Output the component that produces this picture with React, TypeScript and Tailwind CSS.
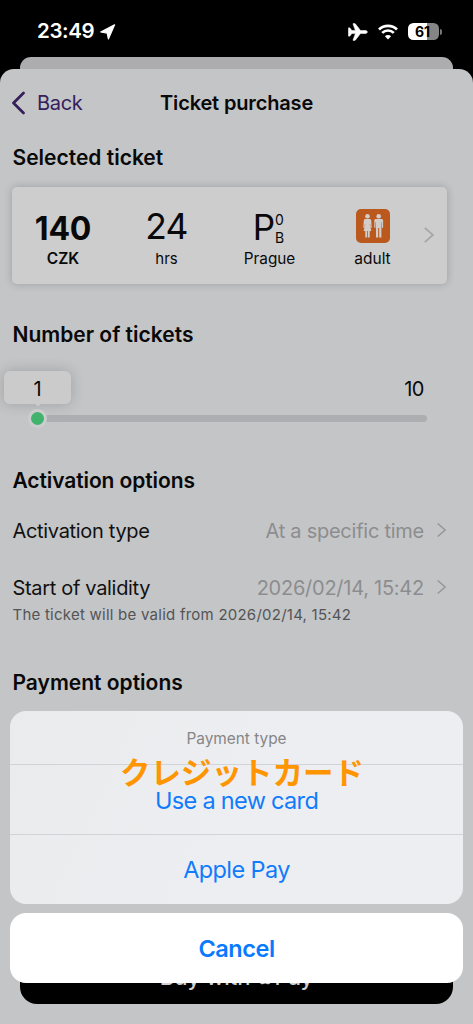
import React from "react";

function Chevron({ className }: { className: string }) {
  return (
    <svg viewBox="0 0 10 16" className={className} fill="none" stroke="currentColor" strokeWidth="1.7">
      <path d="M0.8 0.8 L9 8 L0.8 15.2" />
    </svg>
  );
}

function StatusBar() {
  return (
    <div className="flex h-[57px] shrink-0 items-center pt-[6px] pl-[37px] pr-[31px] text-white">
      <span className="text-[20.5px] font-semibold tracking-[-0.35px]">23:49</span>
      <svg viewBox="0 0 16 16" className="ml-[5px] h-4 w-[17px]" fill="currentColor" stroke="currentColor" strokeWidth="1.2" strokeLinejoin="round">
        <path d="M15.100 .8 8.900 14.900 7.700 9.100 1.200 8z" />
      </svg>
      <svg viewBox="0 0 20 18" className="ml-auto h-[18px] w-5" fill="currentColor" stroke="currentColor" strokeWidth="0.5">
        <path d="M19.400 9c0 .9-1 1.500-2.400 1.500h-4.500L7.500 17c-.2.3-.5.5-.9.5H5.300c-.3 0-.4-.2-.3-.5L7.400 10.500H3.900L2 12.900c-.2.2-.4.300-.7.300H.8c-.3 0-.4-.1-.4-.4V5.200c0-.3.1-.4.4-.4h.5c.3 0 .5.1.7.3L3.900 7.500h3.500L5 1C4.900.7 5 .5 5.300.5h1.300c.4 0 .7.2.9.5l5 6.500H17c1.400 0 2.400.6 2.400 1.500z" />
      </svg>
      <svg viewBox="0 0 20 16" className="ml-[10px] h-4 w-5" fill="none" stroke="currentColor" strokeWidth="2.700">
        <path d="M1 5.500a12.800 12.800 0 0 1 18 0M4.200 8.900a8.200 8.200 0 0 1 11.600 0" />
        <path d="M10 15.400 6.900 12.200a4.400 4.400 0 0 1 6.200 0z" fill="currentColor" stroke="none" />
      </svg>
      <div className="ml-[10px] flex h-[17px] w-[31px] items-center justify-center overflow-hidden rounded-[5.500px] bg-[linear-gradient(to_right,#fff_62%,#858585_62%)] pr-[2px] text-[14px] font-bold tracking-[-0.1px] text-black">
        61
      </div>
      <div className="ml-px h-[6px] w-[2px] rounded-r-full bg-[#777]" />
    </div>
  );
}

function Heading({ children, className }: { children: React.ReactNode; className: string }) {
  return <h2 className={`flex h-10 items-center pl-[0.5px] text-[21px] leading-[31px] font-semibold text-[#090909] ${className}`}>{children}</h2>;
}

function AdultIcon() {
  return (
    <svg viewBox="0 0 34 34" className="h-[34px] w-[34px]">
      <rect width="34" height="34" rx="5" fill="#bb581e" />
      <g fill="#d3cdca">
        <circle cx="11.500" cy="7.300" r="2.300" />
        <path d="M9.400 10h4.200c1 0 1.500.6 1.600 1.500l.5 6.700c0 .7-1 .8-1.200 0L14 14.500l-.2 1.500 1.600 6h-1.700v6.600h-1.800V22h-.8v6.600H9.300V22H7.600L9.200 16 9 14.500l-.5 3.700c-.2.8-1.200.7-1.200 0l.5-6.700c.1-.9.6-1.500 1.600-1.500z" />
        <circle cx="22.700" cy="7.300" r="2.300" />
        <path d="M20 10h5.400c1.200 0 1.700.6 1.700 1.600v6.700c0 .8-1.200.8-1.200 0v-5h-.5v15.300h-2.200V19h-1v9.600H20V13.300h-.5v5c0 .8-1.200.8-1.200 0v-6.700c0-1 .5-1.600 1.700-1.600z" />
      </g>
    </svg>
  );
}

function TicketCard() {
  return (
    <div className="mt-[10px] flex h-[97px] w-[435px] rounded-[5px] bg-[#cdcdcd] text-[#090909] shadow-[0_0_9px_rgba(0,0,0,0.2)]">
      <div className="flex w-[102px] flex-col items-center pt-[20px]">
        <span className="h-[42px] text-[32px] leading-[43px] font-bold tracking-[-0.2px]">140</span>
        <span className="text-[15.5px] leading-[20px] font-semibold">CZK</span>
      </div>
      <div className="flex w-[105px] flex-col items-center pt-[19px]">
        <span className="h-[43px] text-[35.5px] leading-[42px] tracking-[-0.8px]">24</span>
        <span className="text-[15px] leading-[20px]">hrs</span>
      </div>
      <div className="flex w-[101px] flex-col items-center pt-[19px]">
        <span className="mr-[2px] flex h-[43px] items-start text-[35px] leading-[42px]">
          P
          <span className="flex flex-col pt-[5px] text-[14px] leading-[18px]">
            <span>0</span>
            <span>B</span>
          </span>
        </span>
        <span className="text-[15.300px] leading-[20px]">Prague</span>
      </div>
      <div className="flex w-[105px] flex-col items-center pt-[22px]">
        <div className="h-[40px]"><AdultIcon /></div>
        <span className="text-[15.5px] leading-[20px]">adult</span>
      </div>
      <Chevron className="mt-[40px] -ml-px h-4 w-[10px] text-[#a5a5a6]" />
    </div>
  );
}

function TicketSlider() {
  return (
    <div className="relative h-[106px]">
      <div className="flex h-[61px] items-start justify-end pt-[22px] pr-[49px] text-[20px] leading-[27px] tracking-[-0.5px] text-[#090909]">10</div>
      <div className="ml-[25px] h-[7px] w-[389.500px] rounded-full bg-[#adaeb1]" />
      <div className="absolute top-[17px] left-[-8px] flex h-[33px] w-[67px] items-center justify-center rounded-[6px] bg-[#cbcbcb] pt-[3px] text-[20px] text-[#090909] shadow-[0_0_14px_rgba(0,0,0,0.19)]">
        1
        <svg viewBox="0 0 8 4" className="absolute top-[32px] left-[30px] h-1 w-2" fill="#cbcbcb"><path d="M0 0h8L4 3.500z" /></svg>
      </div>
      <div className="absolute top-[55px] left-[16px] h-[19px] w-[19px] rounded-full border-[3px] border-[#cccdce] bg-[#42b36d]" />
    </div>
  );
}

function OptionRow({ label, value }: { label: string; value: string }) {
  return (
    <div className="flex h-10 items-center pr-[27px] pl-[0.5px] text-[20px] leading-[30px]">
      <span className="pt-px tracking-[-0.32px] text-[#111]">{label}</span>
      <span className="ml-auto pt-px tracking-[-0.25px] text-[#8c8d8f]">{value}</span>
      <Chevron className="ml-[13px] h-4 w-[9px] text-[#96979a]" />
    </div>
  );
}

function ActionSheet() {
  return (
    <div className="absolute top-[711px] left-[10px] w-[453px]">
      <div className="relative h-[193px] rounded-[16px] bg-[linear-gradient(115deg,#eaebed,#edeef1_50%)] text-center">
        <div className="h-[54px] border-b border-[#d2d3d6] text-[15.400px] leading-[56px] text-[#858688]">Payment type</div>
        <div className="h-[70px] border-b border-[#d2d3d6] text-[23.5px] leading-[71px] tracking-[-0.68px] text-[#117cfb]">Use a new card</div>
        <div className="h-[69px] text-[23.5px] leading-[70px] tracking-[-0.6px] text-[#117cfb]">Apple Pay</div>
        <div className="absolute top-[40px] left-[110px] h-[40px] whitespace-nowrap font-['Noto_Sans_CJK_JP',sans-serif] text-[30.500px] leading-[40px] font-bold text-[#ff9500]">クレジットカード</div>
      </div>
      <div className="mt-[9px] h-[70px] rounded-[16px] bg-white text-center text-[23.5px] leading-[72px] font-semibold tracking-[-0.45px] text-[#087aff]">Cancel</div>
    </div>
  );
}

export default function App() {
  return (
    <div className="relative flex h-[1024px] w-[473px] flex-col overflow-hidden bg-black font-['Inter',sans-serif]">
      <StatusBar />
      <div className="mx-[20px] h-[12px] shrink-0 rounded-t-[11px] bg-[#adadaf]" />
      <div className="flex grow flex-col rounded-t-[14px] bg-[#c4c5c7] pl-[12px]">
        <div className="flex h-[68px] items-center text-[#35205c]">
          <svg viewBox="0 0 14 24" className="h-6 w-[14px]" fill="none" stroke="currentColor" strokeWidth="2.700" strokeLinecap="round" strokeLinejoin="round">
            <path d="M11.500 2 1.500 12l10 10" />
          </svg>
          <span className="ml-[11px] w-[46px] text-[20px] tracking-[-0.3px]">Back</span>
          <h1 className="ml-[77px] text-[20px] font-semibold tracking-[-0.15px] text-[#090909]">Ticket purchase</h1>
        </div>
        <Heading className="">Selected ticket</Heading>
        <TicketCard />
        <Heading className="mt-[30px]">Number of tickets</Heading>
        <TicketSlider />
        <Heading className="tracking-[-0.1px]">Activation options</Heading>
        <div className="mt-[10px]">
          <OptionRow label="Activation type" value="At a specific time" />
        </div>
        <div className="mt-[17px]">
          <OptionRow label="Start of validity" value="2026/02/14, 15:42" />
          <p className="pl-[0.5px] text-[15px] leading-[16px] tracking-[0.24px] text-[#535456]">The ticket will be valid from 2026/02/14, 15:42</p>
        </div>
        <Heading className="mt-[39px]">Payment options</Heading>
        <div className="mt-auto mb-[20px] ml-[8px] flex h-[56px] w-[433px] shrink-0 items-center justify-center rounded-[17px] bg-black pt-[2px] text-[22px] font-medium text-[#d0d0d0]">
          Buy with&nbsp;
          <svg viewBox="0 0 20 22" className="mb-[3px] h-[20px] w-[18px]" fill="currentColor"><path d="M14 1c.2 2-1.700 4.200-4 4.100C9.800 3 11.800 1.100 14 1zM17.500 8c-3 1.800-2.500 6 .7 7.200-1 2.500-2.500 5-4.300 5-1.500 0-1.900-.9-3.700-.9s-2.300.9-3.700.9C3.900 20.200.5 13 3.200 8.600c1.500-2.500 4.200-2.900 5.700-2.200 1 .5 1.600.5 2.600 0 2-.9 4.600-.3 6 1.600z" /></svg>
          Pay
        </div>
      </div>
      <ActionSheet />
    </div>
  );
}
